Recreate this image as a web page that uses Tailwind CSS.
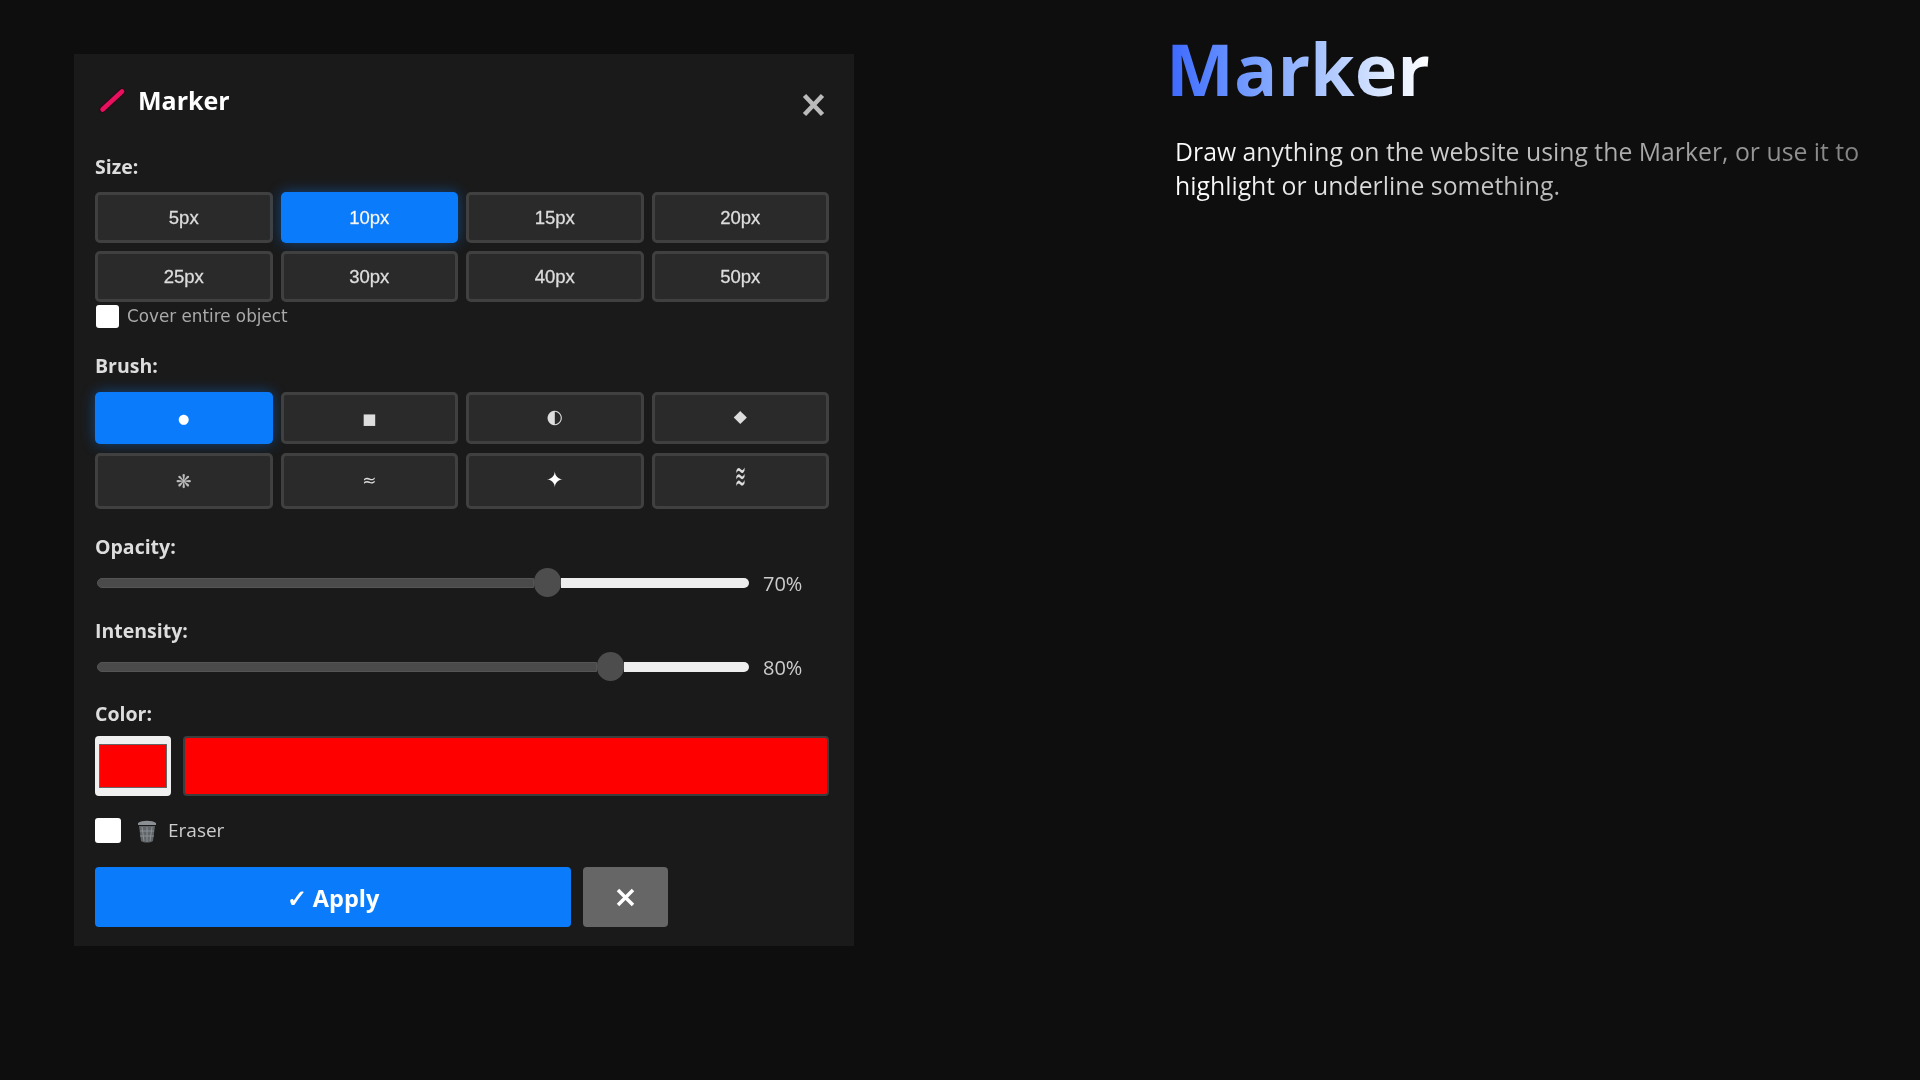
<!DOCTYPE html>
<html lang="en">
<head>
<meta charset="utf-8">
<title>Marker</title>
<script src="https://cdn.jsdelivr.net/npm/@tailwindcss/browser@4"></script>
</head>
<body class="bg-[#0e0e0f] m-0">
<div class="w-[1920px] h-[1080px] overflow-hidden flex items-start font-['Open_Sans',sans-serif]">
  <div class="ml-[74px] mt-[54px] w-[780px] h-[892px] shrink-0 bg-[#1a1a1a] pl-[21px] pr-[25px] pt-[28px] blur-[0.6px]">
    <div class="h-[36px] flex items-center relative">
      <svg class="ml-[3px] w-[28px] h-[28px]" viewBox="0 0 28 28"><path d="M4.5 23.5 L24 5.5" stroke="#2a0a16" stroke-width="7" stroke-linecap="round"/><path d="M4.5 23.5 L24 5.5" stroke="#e8105f" stroke-width="4.5" stroke-linecap="round"/></svg>
      <span class="ml-[12px] text-[25px] font-bold text-white leading-none">Marker</span>
      <svg class="absolute right-[4px] top-[11px] w-[23px] h-[24px]" viewBox="0 0 23 24"><path d="M2.5 2.5 L20.5 21.5 M20.5 2.5 L2.5 21.5" stroke="#bbb" stroke-width="4.5"/></svg>
    </div>
    <div class="mt-[37px] mb-[13px] h-[24px] leading-[24px] text-[19.5px] font-bold text-[#ddd]">Size:</div>
    <div class="grid grid-cols-4 gap-x-[8px] gap-y-[8px] font-['Liberation_Sans',sans-serif] text-[18.5px] text-[#ddd] [-webkit-text-stroke:0.3px_#ddd]">
      <div class="h-[51px] flex items-center justify-center rounded-[5px] bg-[#2a2a2a] border-[3px] border-[#404040]">5px</div>
      <div class="h-[51px] flex items-center justify-center rounded-[5px] bg-[#0a7cfb] text-white shadow-[0_0_14px_rgba(10,124,251,0.45)]">10px</div>
      <div class="h-[51px] flex items-center justify-center rounded-[5px] bg-[#2a2a2a] border-[3px] border-[#404040]">15px</div>
      <div class="h-[51px] flex items-center justify-center rounded-[5px] bg-[#2a2a2a] border-[3px] border-[#404040]">20px</div>
      <div class="h-[51px] flex items-center justify-center rounded-[5px] bg-[#2a2a2a] border-[3px] border-[#404040]">25px</div>
      <div class="h-[51px] flex items-center justify-center rounded-[5px] bg-[#2a2a2a] border-[3px] border-[#404040]">30px</div>
      <div class="h-[51px] flex items-center justify-center rounded-[5px] bg-[#2a2a2a] border-[3px] border-[#404040]">40px</div>
      <div class="h-[51px] flex items-center justify-center rounded-[5px] bg-[#2a2a2a] border-[3px] border-[#404040]">50px</div>
    </div>
    <div class="mt-[3px] h-[23px] flex items-center">
      <span class="w-[23px] h-[23px] rounded-[3px] bg-white ml-[1px]"></span>
      <span class="ml-[8px] font-['DejaVu_Sans',sans-serif] text-[16.8px] text-[#aaa]">Cover entire object</span>
    </div>
    <div class="mt-[26px] mb-[14px] h-[24px] leading-[24px] text-[19.5px] font-bold text-[#ddd]">Brush:</div>
    <div class="grid grid-cols-4 gap-x-[8px] gap-y-[9px] grid-rows-[52px_56px] font-['DejaVu_Sans',sans-serif] text-[#ddd]">
      <div class="flex items-center justify-center rounded-[5px] bg-[#0a7cfb] text-white text-[13px] pt-[2px] shadow-[0_0_14px_rgba(10,124,251,0.45)]">●</div>
      <div class="flex items-center justify-center rounded-[5px] bg-[#2a2a2a] border-[3px] border-[#404040] text-[15px] pt-[3px]">■</div>
      <div class="flex items-center justify-center rounded-[5px] bg-[#2a2a2a] border-[3px] border-[#404040] text-[19px] pb-[4px]">◐</div>
      <div class="flex items-center justify-center rounded-[5px] bg-[#2a2a2a] border-[3px] border-[#404040] text-[17px] pb-[3px]">◆</div>
      <div class="flex items-center justify-center rounded-[5px] bg-[#2a2a2a] border-[3px] border-[#404040] text-[19px] text-[#bbb]">❋</div>
      <div class="flex items-center justify-center rounded-[5px] bg-[#2a2a2a] border-[3px] border-[#404040] text-[17px]">≈</div>
      <div class="flex items-center justify-center rounded-[5px] bg-[#2a2a2a] border-[3px] border-[#404040] text-[21px] text-white">✦</div>
      <div class="flex items-center justify-center rounded-[5px] bg-[#2a2a2a] border-[3px] border-[#404040] text-[20px] pb-[10px]"><span class="inline-block scale-x-[0.65] scale-y-[1.7]">≋</span></div>
    </div>
    <div class="mt-[26px] h-[24px] leading-[24px] text-[19.5px] font-bold text-[#ddd]">Opacity:</div>
    <div class="mt-[9px] h-[29px] flex items-center">
      <div class="w-[437px] h-[10px] ml-[2px] rounded-l-full bg-[#4a4a4a] border border-[#555]"></div>
      <div class="w-[27px] h-[29px] rounded-full bg-[#4d4d4d]"></div>
      <div class="w-[188px] h-[10px] rounded-r-full bg-[#eee]"></div>
      <span class="ml-[14px] pt-[2px] text-[20px] text-[#ccc]">70%</span>
    </div>
    <div class="mt-[22px] h-[24px] leading-[24px] text-[19.5px] font-bold text-[#ddd]">Intensity:</div>
    <div class="mt-[9px] h-[29px] flex items-center">
      <div class="w-[500px] h-[10px] ml-[2px] rounded-l-full bg-[#4a4a4a] border border-[#555]"></div>
      <div class="w-[27px] h-[29px] rounded-full bg-[#4d4d4d]"></div>
      <div class="w-[125px] h-[10px] rounded-r-full bg-[#eee]"></div>
      <span class="ml-[14px] pt-[2px] text-[20px] text-[#ccc]">80%</span>
    </div>
    <div class="mt-[21px] h-[24px] leading-[24px] text-[19.5px] font-bold text-[#ddd]">Color:</div>
    <div class="mt-[10px] h-[60px] flex gap-[12px]">
      <div class="w-[76px] h-[60px] rounded-[4px] bg-[#f0f0f0] flex items-center justify-center"><div class="w-[68px] h-[44px] bg-[#ff0000] border border-[#666]"></div></div>
      <div class="w-[646px] h-[60px] rounded-[4px] bg-[#ff0000] border-2 border-[#3d3d3d]"></div>
    </div>
    <div class="mt-[22px] h-[25px] flex items-center">
      <span class="w-[26px] h-[25px] rounded-[3px] bg-white"></span>
      <svg class="ml-[15px] w-[22px] h-[24px]" viewBox="0 0 22 24"><path d="M2 4 C6 1 16 1 20 4 L20 6 L2 6 Z" fill="#8a8f93"/><path d="M3 7 L19 7 L17 22 C14 24 8 24 5 22 Z" fill="#5f6468"/><path d="M6 8 L8 22 M11 8 L11 23 M16 8 L14 22 M4 12 L18 12 M4 17 L18 17" stroke="#8a8f93" stroke-width="1"/></svg>
      <span class="ml-[10px] text-[19px] text-[#ccc]">Eraser</span>
    </div>
    <div class="mt-[24px] flex gap-[12px]">
      <div class="w-[476px] h-[60px] rounded-[4px] bg-[#0a7cfb] flex items-center justify-center text-white text-[23.5px] font-bold pt-[3px]">✓ Apply</div>
      <div class="w-[85px] h-[60px] rounded-[4px] bg-[#666] flex items-center justify-center"><svg class="w-[19px] h-[19px]" viewBox="0 0 19 19"><path d="M2 2 L17 17 M17 2 L2 17" stroke="#fff" stroke-width="3.5"/></svg></div>
    </div>
  </div>
  <div class="ml-[312px] mt-[19px] w-[730px] shrink-0">
    <h1 class="text-[72px] leading-[98px] font-bold w-fit bg-gradient-to-r from-[#3b66ff] to-white bg-clip-text text-transparent">Marker</h1>
    <p class="mt-[17px] ml-[9px] w-[704px] text-[24.8px] leading-[34px] bg-gradient-to-r from-white to-[#808080] bg-clip-text text-transparent">Draw anything on the website using the Marker, or use it to highlight or underline something.</p>
  </div>
</div>
</body>
</html>
